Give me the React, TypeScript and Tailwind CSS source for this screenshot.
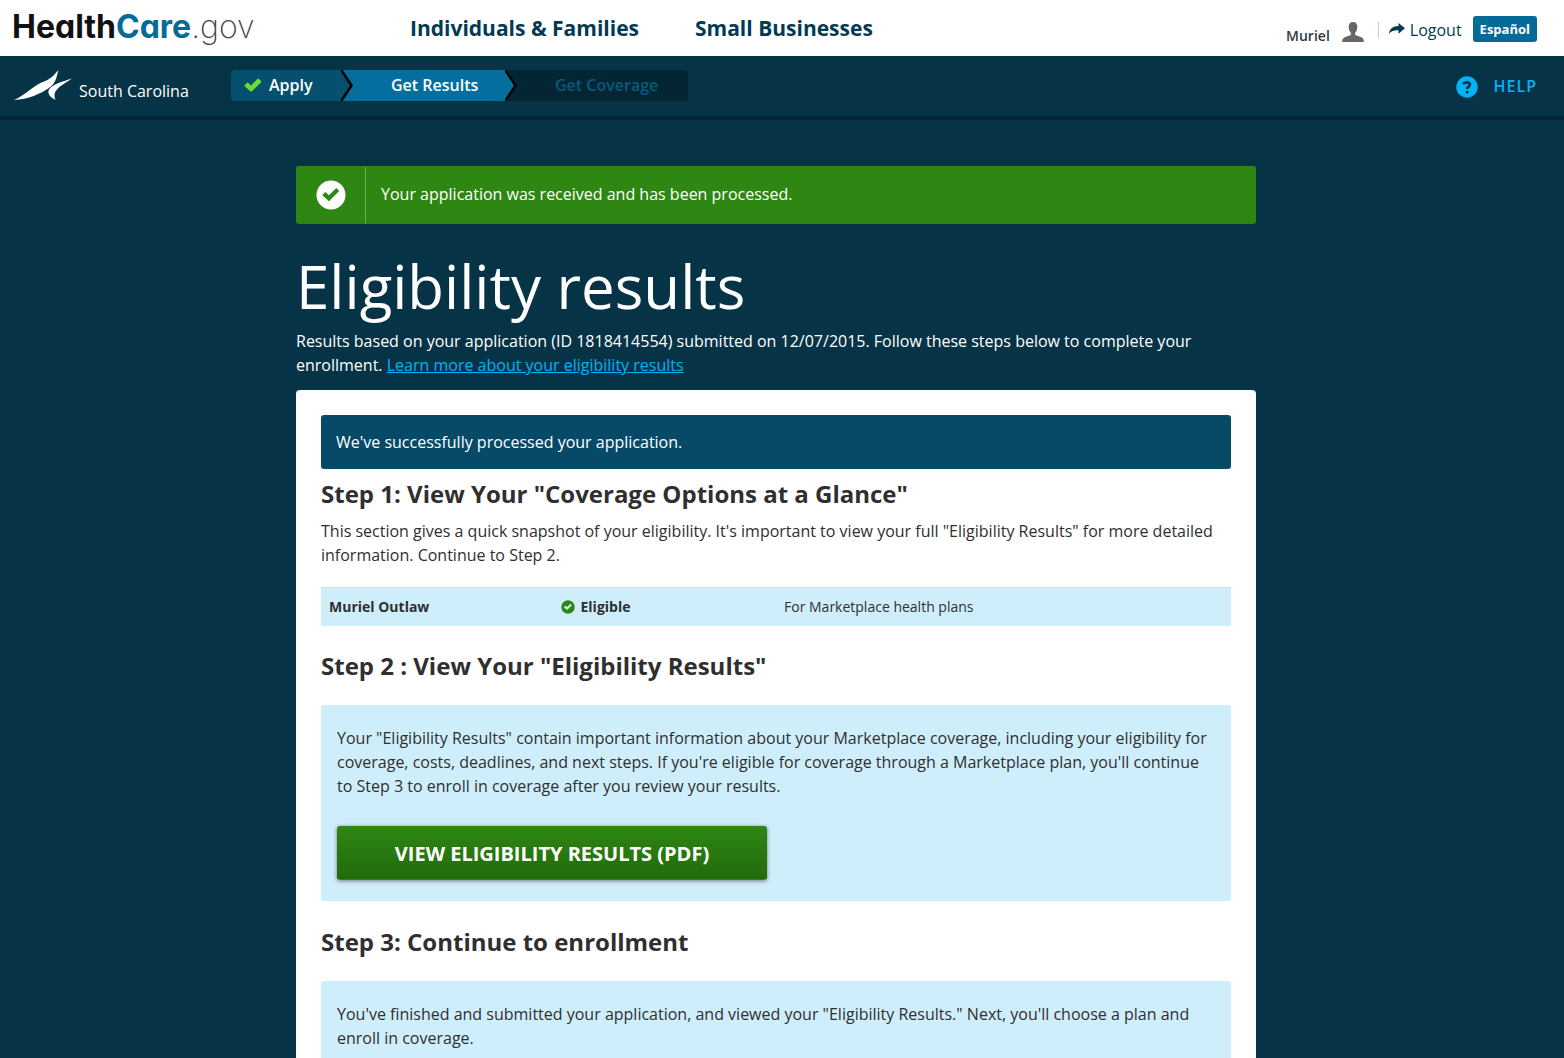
import type { ReactNode } from 'react';

function CheckMark({ className }: { className?: string }) {
  return (
    <svg viewBox="0 0 18 14" className={className} fill="currentColor" aria-hidden="true">
      <path d="M0.7 7.2 3 4.9Q3.7 4.3 4.4 4.9L7 7.4 13.4 0.9Q14.1 0.2 14.9 0.9L17 3Q17.6 3.7 17 4.4L7.9 13.3Q7.1 14 6.3 13.3L0.7 8.3Q0.2 7.8 0.7 7.2Z" />
    </svg>
  );
}

function CheckCircle({ className }: { className?: string }) {
  return (
    <svg viewBox="0 0 30 30" className={className} aria-hidden="true">
      <path
        fill="currentColor"
        fillRule="evenodd"
        d="M15 0.5A14.5 14.5 0 1 1 15 29.5 14.5 14.5 0 1 1 15 0.5ZM6.3 15.3 13 21.3 23.2 11 20.3 8 12.9 15.2 9.3 12.1Z"
      />
    </svg>
  );
}

function StateLogo() {
  return (
    <svg viewBox="0 0 60 32" className="h-8 w-15 shrink-0" fill="#fff" aria-hidden="true">
      <path d="M0 30C13 24 20 15 30 11.500 37 9 40 5 44.500 0 42 8 42.500 12.500 35 18 27 23.500 14 29.500 0 30Z" />
      <path d="M58 8.500C52 12.500 46 16 43 19.500 39.500 23.500 40.500 26.500 41.500 30 36 27 33 23.500 35 19.500 39 13.500 49 11.500 58 8.500Z" />
    </svg>
  );
}

function Header() {
  return (
    <header className="flex h-14 items-center bg-white pl-3 pr-[27px] text-[#023a53]">
      <a
        href="#home"
        aria-label="HealthCare.gov"
        className="w-[398px] shrink-0 pb-0.5 font-['Inter',sans-serif] text-[32px] leading-10 text-[#111]"
      >
        <span className="font-bold [font-feature-settings:'cv11']">Health</span>
        <span className="font-bold text-[#046b99] [font-feature-settings:'cv11']">Care</span>
        <span className="font-extralight text-[#444]">.gov</span>
      </a>
      <nav className="flex gap-14 text-[21px] font-bold">
        <a href="#individuals">Individuals &amp; Families</a>
        <a href="#business">Small Businesses</a>
      </nav>
      <div className="ml-auto flex items-center">
        <span className="pt-4 text-sm font-semibold text-[#323a45]">Muriel</span>
        <svg viewBox="0 0 22 20" className="ml-3 mt-2 h-5 w-[22px]" fill="#666" aria-hidden="true">
          <path d="M11 0C14 0 15.500 2 15.300 5 15.200 8 14.300 9.500 13.200 10.500V13L19.500 15.300Q22 16.500 22 20H0Q0 16.500 2.500 15.300L8.800 13V10.500C7.700 9.500 6.800 8 6.700 5 6.500 2 8 0 11 0Z" />
        </svg>
        <span className="ml-3.5 mt-1 h-4 w-px bg-[#ccc]" />
        <a href="#logout" className="ml-2.5 flex items-center gap-[5px] pt-1">
          <svg viewBox="0 0 16 11" className="-mt-1 h-[11px] w-4" fill="currentColor" aria-hidden="true">
            <path d="M9.500 0 16 5.300 9.500 10.700V7.300C5 7.200 2.500 8 0 10.700 0.500 6 4 3.200 9.500 3.100Z" />
          </svg>
          Logout
        </a>
        <button type="button" className="ml-[11px] mt-0.5 h-[26px] rounded-[3px] bg-[#046b99] px-[7px] text-[13px] font-bold text-white">
          Español
        </button>
      </div>
    </header>
  );
}

function ProgressSteps() {
  return (
    <ol className="mb-0.5 ml-10 flex h-[31px] w-[457px] overflow-hidden rounded bg-[#042534] font-semibold leading-[30px]">
      <li className="flex w-[110px] items-center gap-[7px] bg-[#06506f] pl-[13px] text-white">
        <CheckMark className="h-3.5 w-[18px] text-[#6bdd35]" />
        Apply
      </li>
      <li className="flex text-white">
        <StepArrow from="#06506f" to="#046f9e" />
        <span className="w-[150px] bg-[#046f9e] pl-9">Get Results</span>
      </li>
      <li className="flex flex-1 text-[#075a7f]">
        <StepArrow from="#046f9e" to="#042534" />
        <span className="pl-9">Get Coverage</span>
      </li>
    </ol>
  );
}

function StepArrow({ from, to }: { from: string; to: string }) {
  return (
    <svg viewBox="0 0 14 31" className="h-[31px] w-3.5 shrink-0" aria-hidden="true">
      <path fill={to} d="M0 0H14V31H0Z" />
      <path fill={from} d="M0 0 10 15.500 0 31Z" />
      <path fill="none" stroke="#000" strokeWidth="2.600" d="M-0.500 -1 10.500 15.500-0.500 32" />
    </svg>
  );
}

function Panel({ children, className }: { children: ReactNode; className?: string }) {
  return <div className={`bg-[#cfeefb] px-4 pt-[21px] ${className ?? ''}`}>{children}</div>;
}

function StepHeading({ children }: { children: ReactNode }) {
  return <h2 className="text-2xl font-bold leading-8">{children}</h2>;
}

export default function App() {
  return (
    <div className="flex min-h-screen flex-col bg-[#063346] font-['Open_Sans',sans-serif] text-base leading-6 text-[#2f2f2f]">
      <Header />
      <div className="flex h-16 items-center border-b-4 border-[#042534] pl-3.5 pr-[27px] text-white">
        <StateLogo />
        <span className="ml-[5px] w-28 shrink-0 pt-2.5">South Carolina</span>
        <ProgressSteps />
        <a href="#help" className="ml-auto flex items-center gap-4 font-semibold tracking-[1px] text-[#00b3f7]">
          <svg viewBox="0 0 22 22" className="mt-0.5 h-[22px] w-[22px]" aria-hidden="true">
            <circle cx="11" cy="11" r="10.700" fill="currentColor" />
            <path fill="none" stroke="#063346" strokeWidth="2.800" d="M7.500 8.300C8 6 13.800 5.300 13.900 8.600 14 10.500 11.200 10.700 11.200 13" />
            <circle cx="11.200" cy="16" r="1.600" fill="#063346" />
          </svg>
          HELP
        </a>
      </div>

      <div className="flex flex-1 flex-col pr-3 pt-[46px]">
        <main className="mx-auto flex w-full max-w-[960px] flex-1 flex-col">
          <div role="status" className="flex h-[58px] items-center rounded-[3px] bg-[#2e8712] text-white">
            <div className="flex h-14 w-[70px] items-center justify-center border-r border-[#6fad5c]">
              <CheckCircle className="h-[30px] w-[30px]" />
            </div>
            <p className="pb-0.5 pl-[15px]">Your application was received and has been processed.</p>
          </div>

          <h1 className="mt-5 text-[60px] leading-[84px] text-white">Eligibility results</h1>
          <p className="mt-px text-white">
            Results based on your application (ID 1818414554) submitted on 12/07/2015. Follow these steps below to
            complete your enrollment.{' '}
            <a href="#learn" className="text-[#00b3f7] underline">
              Learn more about your eligibility results
            </a>
          </p>

          <div className="mt-[13px] flex flex-1 flex-col rounded-t bg-white px-[25px] pt-[25px]">
            <p className="mb-[9px] rounded-[3px] bg-[#064a68] p-[15px] text-white">
              We've successfully processed your application.
            </p>
            <StepHeading>Step 1: View Your "Coverage Options at a Glance"</StepHeading>
            <p className="mt-[9px]">
              This section gives a quick snapshot of your eligibility. It's important to view your full "Eligibility
              Results" for more detailed information. Continue to Step 2.
            </p>
            <table className="mt-5 w-full table-fixed text-left text-sm leading-5">
              <tbody>
                <tr className="h-[38px] border-t border-[#d2dfe2] bg-[#cfeefb]">
                  <th scope="row" className="w-1/4 pl-2 font-bold">
                    Muriel Outlaw
                  </th>
                  <td className="w-1/4 pl-3 font-bold">
                    <span className="flex items-center gap-1.5">
                      <CheckCircle className="h-3.5 w-3.5 text-[#2e8712]" />
                      Eligible
                    </span>
                  </td>
                  <td className="pl-2">For Marketplace health plans</td>
                </tr>
              </tbody>
            </table>

            <div className="mb-[23px] mt-6">
              <StepHeading>Step 2 : View Your "Eligibility Results"</StepHeading>
            </div>
            <Panel className="rounded-[3px] pb-[21px]">
              <p>
                Your "Eligibility Results" contain important information about your Marketplace coverage, including your
                eligibility for coverage, costs, deadlines, and next steps. If you're eligible for coverage through a
                Marketplace plan, you'll continue to Step 3 to enroll in coverage after you review your results.
              </p>
              <button
                type="button"
                className="mt-7 h-[54px] w-full max-w-[430px] rounded-[3px] border-b border-[#2e8712] bg-linear-to-b from-[#2e8712] to-[#226a0c] pt-1 text-xl font-bold text-white shadow-[0_1px_4px_rgba(0,0,0,0.5)]"
              >
                VIEW ELIGIBILITY RESULTS (PDF)
              </button>
            </Panel>

            <div className="mb-[23px] mt-[25px]">
              <StepHeading>Step 3: Continue to enrollment</StepHeading>
            </div>
            <Panel className="flex-1 rounded-t-[3px] pb-2">
              <p>
                You've finished and submitted your application, and viewed your "Eligibility Results." Next, you'll
                choose a plan and enroll in coverage.
              </p>
            </Panel>
          </div>
        </main>
      </div>
    </div>
  );
}
